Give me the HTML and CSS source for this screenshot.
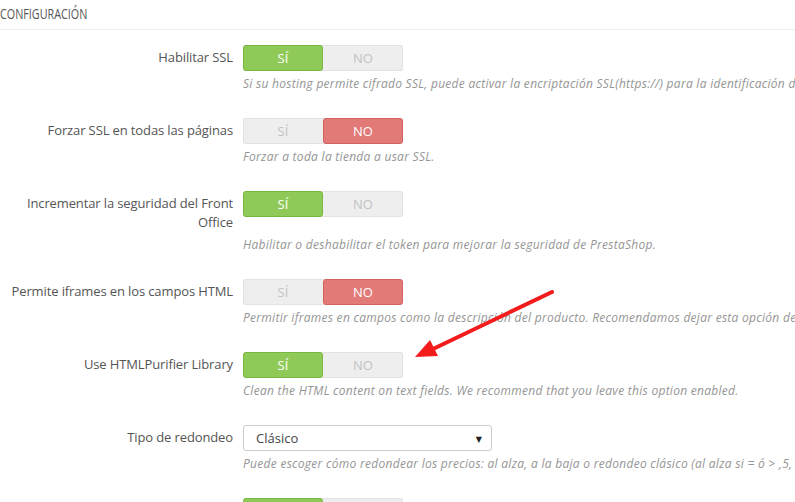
FILE: index.html
```html
<!DOCTYPE html>
<html lang="es">
<head>
    <meta charset="UTF-8">
    <meta name="viewport" content="width=device-width, initial-scale=1.0">
    <title>Configuración</title>
    <link rel="stylesheet" href="styles.css">
</head>
<body>
    <div class="panel">
        <h3 class="panel-heading"><span>Configuración</span></h3>

        <div class="form">
            <div class="form-row">
                <label class="control-label">Habilitar SSL</label>
                <div class="switch">
                    <span class="on active">Sí</span>
                    <span class="off">No</span>
                </div>
                <p class="help">Si su hosting permite cifrado SSL, puede activar la encriptación SSL(https://) para la identificación de los clientes y el proceso de pedido.</p>
            </div>

            <div class="form-row">
                <label class="control-label">Forzar SSL en todas las páginas</label>
                <div class="switch">
                    <span class="on">Sí</span>
                    <span class="off active">No</span>
                </div>
                <p class="help">Forzar a toda la tienda a usar SSL.</p>
            </div>

            <div class="form-row">
                <label class="control-label">Incrementar la seguridad del Front Office</label>
                <div class="switch">
                    <span class="on active">Sí</span>
                    <span class="off">No</span>
                </div>
                <p class="help">Habilitar o deshabilitar el token para mejorar la seguridad de PrestaShop.</p>
            </div>

            <div class="form-row">
                <label class="control-label">Permite iframes en los campos HTML</label>
                <div class="switch">
                    <span class="on">Sí</span>
                    <span class="off active">No</span>
                </div>
                <p class="help">Permitir iframes en campos como la descripción del producto. Recomendamos dejar esta opción deshabilitada.</p>
            </div>

            <div class="form-row">
                <label class="control-label">Use HTMLPurifier Library</label>
                <div class="switch">
                    <span class="on active">Sí</span>
                    <span class="off">No</span>
                </div>
                <p class="help">Clean the HTML content on text fields. We recommend that you leave this option enabled.</p>
            </div>

            <div class="form-row">
                <label class="control-label">Tipo de redondeo</label>
                <div class="select">
                    <span>Clásico</span>
                    <span class="caret">▼</span>
                </div>
                <p class="help">Puede escoger cómo redondear los precios: al alza, a la baja o redondeo clásico (al alza si = ó &gt; ,5, a la baja si &lt; ,5).</p>
            </div>

            <div class="form-row">
                <label class="control-label"></label>
                <div class="switch">
                    <span class="on active">Sí</span>
                    <span class="off">No</span>
                </div>
            </div>
        </div>
    </div>

    <!-- red annotation arrow drawn over the screenshot -->
    <svg class="arrow" width="795" height="502" viewBox="0 0 795 502">
        <line x1="552" y1="292" x2="433" y2="349" stroke="#f21c1c" stroke-width="4" stroke-linecap="round"/>
        <polygon points="415,357 438,356 430,340" fill="#f21c1c"/>
    </svg>
</body>
</html>
```

FILE: styles.css
```css
body {
    margin: 0;
    background-color: #fff;
    color: #555;
    font-family: "Open Sans", "DejaVu Sans", sans-serif;
    font-size: 13px;
    overflow: hidden;
    width: 795px;
    height: 502px;
}
.panel-heading {
    margin: 0;
    padding: 4px 0 5px;
    line-height: 20px;
    height: 20px;
    border-bottom: 1px solid #eeeeee;
    font-size: 14px;
    font-weight: 400;
    text-transform: uppercase;
    color: #555;
}
.panel-heading span {
    display: inline-block;
    transform: scaleX(0.77);
    transform-origin: left center;
}
.form {
    padding-top: 15px;
}
.form-row {
    display: grid;
    grid-template-columns: 243px 1fr;
    margin-bottom: 25px;
}
.control-label {
    text-align: right;
    padding: 3px 10px 0 0;
    line-height: 19px;
    letter-spacing: -0.12px;
}
.help {
    grid-column: 2;
    margin: 4px 0 0;
    line-height: 18px;
    font-size: 12px;
    font-style: italic;
    letter-spacing: 0.28px;
    color: #959595;
    white-space: nowrap;
}
.switch {
    display: flex;
    width: 160px;
    height: 26px;
    background-color: #eeeeee;
    border-radius: 3px;
    box-shadow: inset 0 0 0 1px #e2e2e2;
}
.switch span {
    flex: 1;
    text-align: center;
    line-height: 24px;
    text-transform: uppercase;
    color: #c2c2c2;
    border: 1px solid transparent;
    border-radius: 3px;
}
.switch .on.active {
    background-color: #8fca58;
    border-color: #78b83f;
    color: #fff;
}
.switch .off.active {
    background-color: #e27a77;
    border-color: #d2605c;
    color: #fff;
}
.select {
    display: flex;
    justify-content: space-between;
    align-items: center;
    width: 249px;
    height: 26px;
    box-sizing: border-box;
    padding: 0 9px 0 12px;
    border: 1px solid #cccccc;
    border-radius: 3px;
    color: #444;
}
.select .caret {
    font-size: 8px;
    color: #222;
}
.arrow {
    position: absolute;
    top: 0;
    left: 0;
    pointer-events: none;
}
```
